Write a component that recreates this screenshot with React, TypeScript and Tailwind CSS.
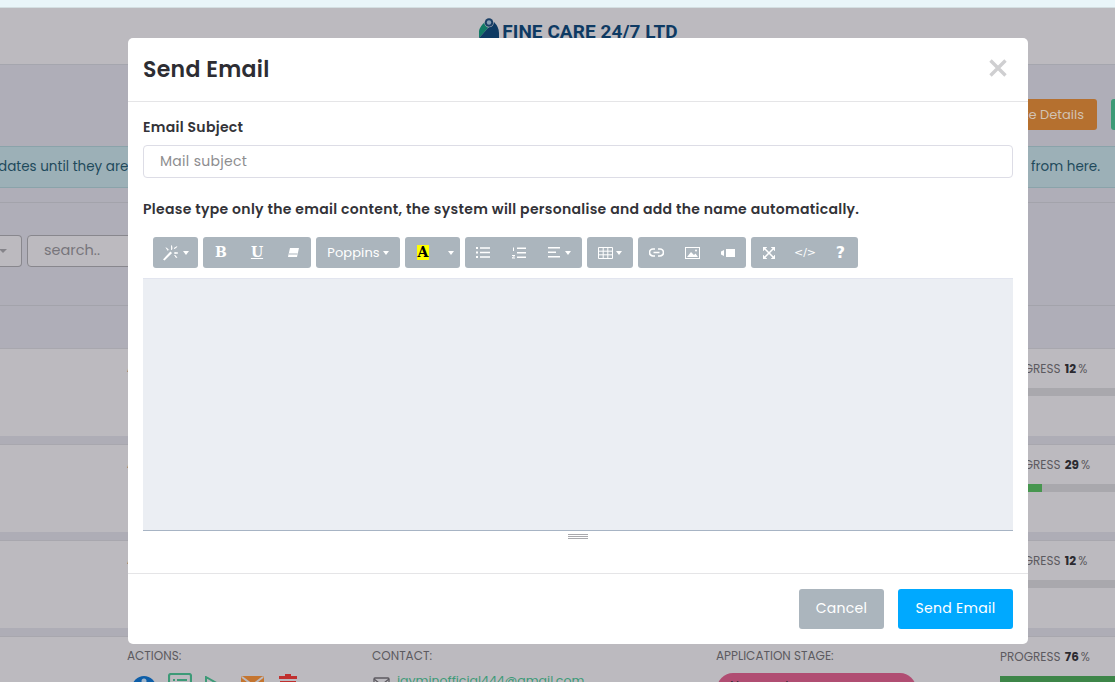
import React from "react";

const F = "font-['Poppins','Inter','Liberation_Sans',sans-serif]";

function Caret() {
  return <span className="inline-block w-0 h-0 border-x-[3px] border-x-transparent border-t-[4px] border-t-white" />;
}

function Group({ children }: { children: React.ReactNode }) {
  return <div className="h-[31px] flex items-center bg-[#abb5bd] rounded-[3px] text-white shrink-0">{children}</div>;
}

function Tool({ w, children }: { w: number; children: React.ReactNode }) {
  return (
    <div className="h-full flex items-center justify-center gap-[3px]" style={{ width: w }}>
      {children}
    </div>
  );
}

function Progress({ pct }: { pct: number }) {
  return (
    <div className="pt-[1px]">
      PROGRESS <b className="ml-[1px] text-[#2b2a30]">{pct}</b>
      <span className="ml-[2px]">%</span>
    </div>
  );
}

function Row({ pct, fill }: { pct: number; fill: number }) {
  return (
    <div className="h-[88px] bg-[#bcbabf] border-t border-[#a8a7ae] flex pl-[127px] pt-[10px] text-[#5c5a60] text-[12px]">
      <div className="w-[245px]">ACTIONS:</div>
      <div className="w-[344px]">CONTACT:</div>
      <div className="w-[284px]">APPLICATION STAGE:</div>
      <div className="flex-1">
        <Progress pct={pct} />
        <div className="h-[8px] mt-[10px] bg-[#a9a8ad]">
          <div className="h-full bg-[#47964f]" style={{ width: fill }} />
        </div>
      </div>
    </div>
  );
}

export default function App() {
  return (
    <div className={`relative w-[1115px] h-[682px] overflow-hidden bg-[#bcbabf] ${F}`}>
      <div className="h-[8px] bg-[#e9f5f9] border-b border-[#d4dfe2]" />
      <header className="h-[56px] bg-[#bcbabf] flex items-start justify-center pt-[10px] pl-[43px]">
        <div className="flex items-start gap-[3px] ml-[-1px]">
          <svg width="20" height="24" viewBox="0 0 20 24">
            <path d="M0 24V13Q1 8 6 4L9 10L0 20Z" fill="#127a66" />
            <path d="M0 24V20L9 10L15 4Q20 9 20 15V24Z" fill="#0e3a63" />
            <circle cx="10" cy="4.500" r="4.800" fill="#bcbabf" />
            <circle cx="10" cy="4.500" r="4.300" fill="#1b3f66" />
            <circle cx="10" cy="4.500" r="2.200" fill="#8aa0b5" />
          </svg>
          <span className="font-['Roboto',sans-serif] font-bold text-[19px] leading-[22px] tracking-[0.06px] text-[#0e3a63] mt-[3px] whitespace-nowrap">FINE CARE 24/7 LTD</span>
        </div>
      </header>

      <section className="h-[284px] bg-[#afaeb8] border-t border-[#a5a6ae]">
        <div className="h-[81px] flex justify-end items-center gap-[14px] pt-[18px]">
          <div className="w-[180px] h-[31px] bg-[#b5702f] rounded-[3px] text-[#d2c2b3] text-[13px] flex items-center justify-end pr-[13px]">
            Update Details
          </div>
          <div className="w-[4px] h-[31px] bg-[#3d9a77] rounded-l-[3px]" />
        </div>
        <div className="h-[42px] bg-[#9cb0b7] border-y border-[#8aa3aa] flex items-center justify-between text-[#1f4a5c] text-[13.5px] whitespace-nowrap">
          <span className="-ml-[2px]">dates until they are</span>
          <span className="pr-[15px]">from here.</span>
        </div>
        <div className="h-[14px]" />
        <div className="h-[104px] border-y border-[#a3a3ab] flex items-center gap-[5px] pb-[6px]">
          <div className="w-[22px] h-[32px] border border-l-0 border-[#88878d] rounded-r-[4px] bg-[#bcbabf] flex items-center justify-end pr-[14px]">
            <span className="w-0 h-0 border-x-[4px] border-x-transparent border-t-[4px] border-t-[#85848a]" />
          </div>
          <div className="w-[150px] h-[32px] border border-[#88878d] rounded-[4px] bg-[#bcbabf] text-[#77757b] text-[14.5px] pl-[16px] flex items-center">search..</div>
        </div>
      </section>

      <div>
        <Row pct={12} fill={17} />
        <div className="h-[8px] bg-[#aeadb6]" />
        <Row pct={29} fill={42} />
        <div className="h-[8px] bg-[#aeadb6]" />
        <Row pct={12} fill={17} />
        <div className="h-[8px] bg-[#aeadb6]" />
        <div className="h-[46px] bg-[#bcbabf] border-t border-[#a8a7ae] flex pl-[127px] pt-[10px] text-[#5c5a60] text-[12px]">
          <div className="w-[245px]">
            <div>ACTIONS:</div>
            <div className="flex items-start mt-[8px] ml-[5px]">
              <svg width="24" height="24" viewBox="0 0 24 24" className="mt-[3px]">
                <circle cx="12" cy="12" r="12" fill="#0d5ea8" />
                <circle cx="12" cy="5" r="2.500" fill="#9fb4c9" />
              </svg>
              <svg width="24" height="24" viewBox="0 0 24 24" className="ml-[12px]">
                <rect x="1" y="1" width="22" height="22" rx="2" fill="none" stroke="#3d9a77" strokeWidth="2.200" />
                <path d="M5 7h2M9 7h10M5 11h2M9 11h10" stroke="#3d9a77" strokeWidth="2" />
              </svg>
              <svg width="16" height="20" viewBox="0 0 16 20" className="ml-[13px] mt-[3px]">
                <path d="M1 1L15 9L1 17Z" fill="none" stroke="#3d9a77" strokeWidth="2" />
              </svg>
              <svg width="23" height="20" viewBox="0 0 23 20" className="ml-[20px] mt-[3px]">
                <rect width="23" height="20" rx="2" fill="#c5752f" />
                <path d="M1 1L11.500 9L22 1" fill="none" stroke="#bcbabf" strokeWidth="2" />
              </svg>
              <svg width="18" height="20" viewBox="0 0 18 20" className="ml-[15px] mt-[1px]">
                <path d="M6 0h6v2h6v3H0V2h6ZM1 7h16v13H1Z" fill="#c0302f" />
              </svg>
            </div>
          </div>
          <div className="w-[344px]">
            <div>CONTACT:</div>
            <div className="flex items-start gap-[7px] mt-[8px] ml-[1px]">
              <svg width="17" height="14" viewBox="0 0 17 14" className="mt-[4px] shrink-0">
                <rect x="1" y="1" width="15" height="12" rx="1" fill="none" stroke="#5c5a60" strokeWidth="1.300" />
                <path d="M1 2L8.500 8L16 2" fill="none" stroke="#5c5a60" strokeWidth="1.300" />
              </svg>
              <span className="text-[#3d9a77] text-[12.5px] leading-[16px]">jayminofficial444@gmail.com</span>
            </div>
          </div>
          <div className="w-[284px]">
            <div>APPLICATION STAGE:</div>
            <div className="w-[199px] h-[32px] mt-[8px] ml-[1px] bg-[#b04d72] rounded-[16px] text-[#2b2a30] text-[13px] pl-[13px] pt-[3px]">New worker</div>
          </div>
          <div className="flex-1">
            <Progress pct={76} />
            <div className="h-[8px] mt-[10px] bg-[#3d8548]" />
          </div>
        </div>
      </div>

      {/* Modal */}
      <div className="absolute left-[128px] top-[38px] w-[900px] h-[606px] bg-white rounded-[5px] flex flex-col text-[#333338] tracking-[0.3px]">
        <div className="h-[64px] shrink-0 border-b border-[#e5e5e7] flex items-center justify-between pl-[15px] pr-[21px]">
          <h2 className="text-[22px] font-semibold text-[#2d2d33]">Send Email</h2>
          <svg width="18" height="18" viewBox="0 0 18 18" className="-mt-[3px]">
            <path d="M1.500 1.500L16.500 16.500M16.500 1.500L1.500 16.500" stroke="#cfcfd1" strokeWidth="3.400" />
          </svg>
        </div>
        <div className="flex-1 px-[15px] flex flex-col">
          <label className="mt-[15px] text-[14px] font-semibold leading-[21px]">Email Subject</label>
          <div className="mt-[7px] h-[33px] border border-[#dddde6] rounded-[4px] flex items-center pl-[16px] text-[14px] text-[#8d8d8f]">Mail subject</div>
          <p className="mt-[21px] text-[14px] font-semibold leading-[21px]">Please type only the email content, the system will personalise and add the name automatically.</p>
          <div className="mt-[17px] pl-[10px] flex gap-[5px] h-[31px] tracking-normal">
            <Group>
              <Tool w={45}>
                <svg width="17" height="16" viewBox="0 0 16 14" fill="#fff">
                  <path d="M0 13L7 5.500L8.500 7L1.500 14Z" />
                  <path d="M8 0l.5 2.500L8 4ZM13 1l-2 2-.5-.5ZM3 2l2 2-.5.500ZM11 6.500l3 .5-3 .5ZM11 9l2 2-.500.500Z" stroke="#fff" strokeWidth=".8" />
                </svg>
                <Caret />
              </Tool>
            </Group>
            <Group>
              <Tool w={36}><span className="font-['DejaVu_Serif',serif] font-bold text-[14px]">B</span></Tool>
              <Tool w={36}><span className="font-['DejaVu_Serif',serif] font-bold text-[14px] underline">U</span></Tool>
              <Tool w={36}>
                <svg width="11" height="9" viewBox="0 0 11 9"><path d="M2 0h9l-2 9H0Z" fill="#fff" /><path d="M1 6h8.500" stroke="#abb5bd" strokeWidth="1" /></svg>
              </Tool>
            </Group>
            <Group>
              <Tool w={84}><span className="text-[13px] tracking-[0.1px]">Poppins</span><Caret /></Tool>
            </Group>
            <Group>
              <div className="w-[36px] flex justify-center">
                <span className="w-[12px] h-[15px] bg-[#ffff00] text-black font-['DejaVu_Serif',serif] font-bold text-[14px] leading-[15px] text-center">A</span>
              </div>
              <div className="w-[19px] flex justify-center"><Caret /></div>
            </Group>
            <Group>
              <Tool w={36}>
                <svg width="14" height="11" viewBox="0 0 14 11" fill="#fff"><path d="M0 0h2v2H0ZM0 4.500h2v2H0ZM0 9h2v2H0ZM4 .3h10v1.400H4ZM4 4.800h10v1.400H4ZM4 9.300h10v1.400H4Z" /></svg>
              </Tool>
              <Tool w={36}>
                <svg width="14" height="12" viewBox="0 0 14 12" fill="#fff"><path d="M5 .5h9v1.500H5ZM5 5h9v1.500H5ZM5 9.500h9V11H5ZM1 .5h1v3.500H1ZM0 8h3v1L1 10.500h2v1H0v-1L2 9H0Z" /></svg>
              </Tool>
              <Tool w={45}>
                <svg width="12" height="11" viewBox="0 0 12 11" fill="#fff"><path d="M0 0h12v1.500H0ZM0 4.500h8V6H0ZM0 9h12v1.500H0Z" /></svg>
                <span className="ml-[2px] flex"><Caret /></span>
              </Tool>
            </Group>
            <Group>
              <Tool w={46}>
                <svg width="15" height="12" viewBox="0 0 15 12" fill="none" stroke="#fff" strokeWidth="1"><path d="M.5 .5h14v11H.5ZM.5 4.200h14M.5 7.800h14M5.200 .5v11M9.800 .5v11" /></svg>
                <Caret />
              </Tool>
            </Group>
            <Group>
              <Tool w={36}>
                <svg width="15" height="9" viewBox="0 0 15 9" fill="none" stroke="#fff" strokeWidth="1.700"><path d="M6 1H4a3.500 3.500 0 000 7h2M9 1h2a3.500 3.500 0 010 7H9M4.500 4.500h6" /></svg>
              </Tool>
              <Tool w={36}>
                <svg width="15" height="12" viewBox="0 0 15 12"><rect x=".5" y=".5" width="14" height="11" fill="none" stroke="#fff" /><path d="M2 10l4-5 3 3 1.500-1.500L13 10Z" fill="#fff" /><circle cx="11" cy="3.500" r="1" fill="#fff" /></svg>
              </Tool>
              <Tool w={36}>
                <svg width="14" height="8" viewBox="0 0 14 8" fill="#fff"><path d="M5 0h9v8H5ZM0 2.500l3-1.500v6L0 5.500Z" /></svg>
              </Tool>
            </Group>
            <Group>
              <Tool w={36}>
                <svg width="12" height="12" viewBox="0 0 12 12" fill="none" stroke="#fff" strokeWidth="1.500"><path d="M2 2L10 10M10 2L2 10" /><path d="M0 4V0h4L0 4ZM8 0h4v4L8 0ZM12 8v4H8l4-4ZM4 12H0V8l4 4Z" fill="#fff" strokeWidth=".5" /></svg>
              </Tool>
              <Tool w={36}><span className="text-[11px] mt-[1px] font-['DejaVu_Sans',sans-serif]">&lt;/&gt;</span></Tool>
              <Tool w={35}><span className="font-['DejaVu_Sans',sans-serif] font-bold text-[16px]">?</span></Tool>
            </Group>
          </div>
          <div className="mt-[10px] h-[253px] bg-[#ebeef3] border-t border-[#e2e5ef] border-b border-b-[#a7b4c4]" />
          <div className="h-[11px] flex flex-col items-center justify-center gap-[1px]">
            <div className="w-[20px] h-px bg-[#a9a9ad]" />
            <div className="w-[20px] h-px bg-[#a9a9ad]" />
            <div className="w-[20px] h-px bg-[#a9a9ad]" />
          </div>
        </div>
        <div className="h-[71px] shrink-0 border-t border-[#e5e5e7] flex items-center justify-end gap-[14px] pr-[15px]">
          <div className="w-[85px] h-[40px] bg-[#abb5bd] rounded-[3px] text-white text-[14px] flex items-center justify-center pb-[1px]">Cancel</div>
          <div className="w-[115px] h-[40px] bg-[#00a9ff] rounded-[3px] text-white text-[14px] flex items-center justify-center pb-[1px]">Send Email</div>
        </div>
      </div>
    </div>
  );
}
